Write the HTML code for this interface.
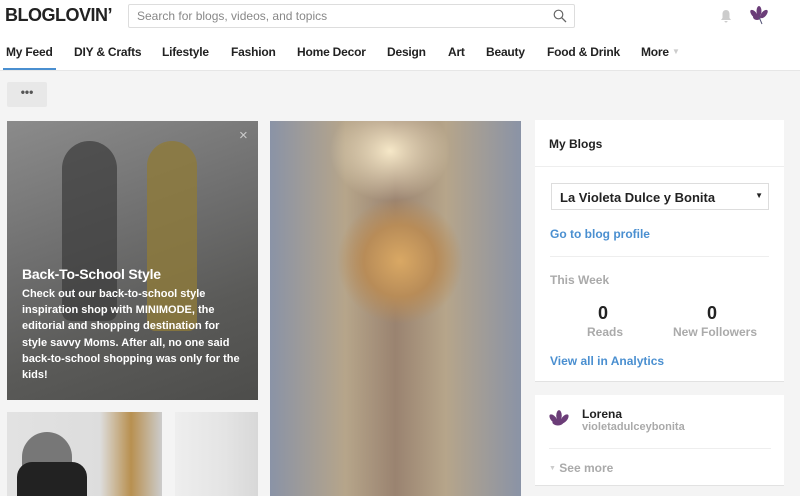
<!DOCTYPE html>
<html><head><meta charset="utf-8"><style>
*{margin:0;padding:0;box-sizing:border-box}
body{width:800px;height:496px;overflow:hidden;background:#f4f4f4;font-family:"Liberation Sans",sans-serif;position:relative}
.a{position:absolute}
#top{left:0;top:0;width:800px;height:71px;background:#fff;border-bottom:1px solid #e6e6e6}
.logo{left:5px;top:5px;font-size:18px;font-weight:bold;color:#222;letter-spacing:-0.5px}
.search{left:128px;top:4px;width:447px;height:24px;border:1px solid #ddd;border-radius:2px;font-size:12px;color:#888;padding:4px 8px}
.nav{top:45px;font-size:12px;font-weight:bold;color:#222;letter-spacing:-0.2px}
.card{background:#fff;border-bottom:1px solid #e2e2e2}
.blue{color:#4a8fd0;font-weight:bold;font-size:12px}
.gray{color:#aaa;font-weight:bold;font-size:12px}
</style></head><body>
<div id="top" class="a"></div>
<div class="a logo">BLOGLOVIN’</div>
<div class="a search">Search for blogs, videos, and topics
<svg class="a" style="left:424px;top:4px" width="14" height="14" viewBox="0 0 14 14"><circle cx="5.5" cy="5.5" r="4.3" fill="none" stroke="#666" stroke-width="1.2"/><path d="M8.7 8.7L13 13" stroke="#666" stroke-width="1.3"/></svg></div>
<svg class="a" style="left:719px;top:9px" width="14" height="14" viewBox="0 0 14 14"><path d="M7 1C4.5 1 3.5 3 3.5 5v4L2 11h10l-1.5-2V5C10.5 3 9.5 1 7 1z M5.5 12h3a1.5 1.5 0 0 1-3 0z" fill="#ccc"/></svg>
<svg class="a" style="left:749px;top:5px" width="20" height="20" viewBox="0 0 20 20"><g fill="#6b3d78"><ellipse cx="10" cy="6" rx="2.5" ry="5"/><ellipse cx="5" cy="9" rx="2.5" ry="5" transform="rotate(-40 5 9)"/><ellipse cx="15" cy="9" rx="2.5" ry="5" transform="rotate(40 15 9)"/><ellipse cx="8" cy="12" rx="4" ry="3"/></g><path d="M10 12L13 19" stroke="#557" stroke-width="1"/></svg>
<div class="a nav" style="left:6px">My Feed</div>
<div class="a" style="left:3px;top:68px;width:53px;height:2px;background:#4a8fd0"></div>
<div class="a nav" style="left:74px">DIY &amp; Crafts</div>
<div class="a nav" style="left:162px">Lifestyle</div>
<div class="a nav" style="left:231px">Fashion</div>
<div class="a nav" style="left:297px">Home Decor</div>
<div class="a nav" style="left:387px">Design</div>
<div class="a nav" style="left:448px">Art</div>
<div class="a nav" style="left:486px">Beauty</div>
<div class="a nav" style="left:547px">Food &amp; Drink</div>
<div class="a nav" style="left:641px">More <span style="color:#ccc;font-size:8px;vertical-align:2px">▼</span></div>
<div class="a" style="left:7px;top:82px;width:40px;height:25px;background:#e8e8e8;border-radius:2px;text-align:center;font-size:12px;line-height:20px;font-weight:bold;color:#555">•••</div>

<div class="a" style="left:7px;top:121px;width:251px;height:279px;background:linear-gradient(160deg,#8b8b8b 0%,#6f6f6f 40%,#5a5a58 70%,#4d4d4b 100%);overflow:hidden">
<div class="a" style="left:55px;top:20px;width:55px;height:180px;background:#3a3a3a;border-radius:30px 30px 10px 10px;opacity:.7"></div>
<div class="a" style="left:140px;top:20px;width:50px;height:190px;background:#8e7a3a;border-radius:30px 30px 10px 10px;opacity:.8"></div>
<div class="a" style="left:232px;top:6px;color:#ccc;font-size:15px">×</div>
<div class="a" style="left:15px;top:145px;color:#fff;font-weight:bold;font-size:14px;letter-spacing:-0.2px">Back-To-School Style</div>
<div class="a" style="left:15px;top:165px;width:222px;color:#fff;font-weight:bold;font-size:11px;line-height:16.2px">Check out our back-to-school style inspiration shop with MINIMODE, the editorial and shopping destination for style savvy Moms. After all, no one said back-to-school shopping was only for the kids!</div>
</div>
<div class="a" style="left:7px;top:412px;width:155px;height:84px;background:linear-gradient(90deg,#e2e2e2 0%,#ddd 60%,#b89050 80%,#ccc 100%)"><div class="a" style="left:15px;top:20px;width:50px;height:64px;background:#777;border-radius:25px 25px 0 0"></div><div class="a" style="left:10px;top:50px;width:70px;height:34px;background:#222;border-radius:15px 15px 0 0"></div></div>
<div class="a" style="left:175px;top:412px;width:83px;height:84px;background:linear-gradient(90deg,#eee,#e4e4e4 60%,#d8d8d8)"></div>

<div class="a" style="left:270px;top:121px;width:251px;height:375px;background:radial-gradient(ellipse 90px 90px at 130px 140px,#d9a864 0%,#b88c58 40%,transparent 70%),radial-gradient(ellipse 60px 50px at 120px 30px,#f6e8c8,transparent),linear-gradient(90deg,#8a93a6 0%,#b6a58a 30%,#9a8370 50%,#b6a58a 70%,#8a93a6 100%)"></div>

<div class="a card" style="left:535px;top:120px;width:249px;height:262px"></div>
<div class="a" style="left:535px;top:166px;width:249px;height:1px;background:#eee"></div>
<div class="a" style="left:549px;top:137px;font-size:12px;font-weight:bold;color:#222">My Blogs</div>
<div class="a" style="left:551px;top:183px;width:218px;height:27px;border:1px solid #ddd;font-size:13px;font-weight:bold;color:#222;padding:6px 8px">La Violeta Dulce y Bonita<span class="a" style="right:5px;top:7px;font-size:8px">▼</span></div>
<div class="a blue" style="left:550px;top:227px">Go to blog profile</div>
<div class="a" style="left:550px;top:256px;width:219px;height:1px;background:#eee"></div>
<div class="a gray" style="left:550px;top:273px">This Week</div>
<div class="a" style="left:598px;top:303px;font-size:18px;font-weight:bold;color:#222">0</div>
<div class="a gray" style="left:587px;top:325px">Reads</div>
<div class="a" style="left:707px;top:303px;font-size:18px;font-weight:bold;color:#222">0</div>
<div class="a gray" style="left:673px;top:325px">New Followers</div>
<div class="a blue" style="left:550px;top:354px">View all in Analytics</div>

<div class="a card" style="left:535px;top:395px;width:249px;height:91px"></div>
<svg class="a" style="left:547px;top:409px" width="24" height="22" viewBox="0 0 20 20"><g fill="#6b3d78"><ellipse cx="10" cy="6" rx="2.5" ry="5"/><ellipse cx="5" cy="9" rx="2.5" ry="5" transform="rotate(-40 5 9)"/><ellipse cx="15" cy="9" rx="2.5" ry="5" transform="rotate(40 15 9)"/><ellipse cx="9" cy="12" rx="5" ry="3"/></g></svg>
<div class="a" style="left:582px;top:407px;font-size:12px;font-weight:bold;color:#222">Lorena</div>
<div class="a gray" style="left:582px;top:421px;font-size:11px">violetadulceybonita</div>
<div class="a" style="left:549px;top:448px;width:222px;height:1px;background:#eee"></div>
<div class="a gray" style="left:549px;top:461px"><span style="font-size:7px;vertical-align:2px;color:#ccc">▼</span> See more</div>
</body></html>
